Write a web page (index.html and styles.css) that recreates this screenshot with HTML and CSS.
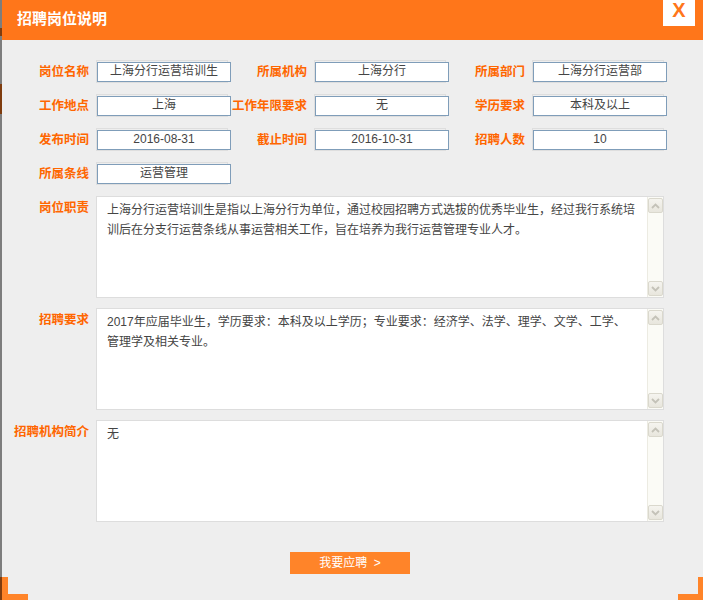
FILE: index.html
```html
<!DOCTYPE html>
<html lang="zh-CN">
<head>
<meta charset="utf-8">
<title>招聘岗位说明</title>
<link rel="stylesheet" href="styles.css">
</head>
<body>
<div class="page">
  <div class="strip"></div>
  <div class="modal">
    <div class="header">
      <h1 class="title">招聘岗位说明</h1>
      <span class="close">X</span>
    </div>
    <div class="content">
      <div class="fields">
        <span class="label">岗位名称</span>
        <span class="field"><span class="value">上海分行运营培训生</span></span>
        <span class="label">所属机构</span>
        <span class="field"><span class="value">上海分行</span></span>
        <span class="label">所属部门</span>
        <span class="field"><span class="value">上海分行运营部</span></span>

        <span class="label">工作地点</span>
        <span class="field"><span class="value">上海</span></span>
        <span class="label">工作年限要求</span>
        <span class="field"><span class="value">无</span></span>
        <span class="label">学历要求</span>
        <span class="field"><span class="value">本科及以上</span></span>

        <span class="label">发布时间</span>
        <span class="field"><span class="value">2016-08-31</span></span>
        <span class="label">截止时间</span>
        <span class="field"><span class="value">2016-10-31</span></span>
        <span class="label">招聘人数</span>
        <span class="field"><span class="value">10</span></span>

        <span class="label">所属条线</span>
        <span class="field"><span class="value">运营管理</span></span>
      </div>

      <div class="blocks">
        <div class="block">
          <span class="block-label">岗位职责</span>
          <div class="box">
            <div class="box-text">上海分行运营培训生是指以上海分行为单位，通过校园招聘方式选拔的优秀毕业生，经过我行系统培训后在分支行运营条线从事运营相关工作，旨在培养为我行运营管理专业人才。</div>
            <div class="scrollbar">
              <span class="sb-btn"><svg width="9" height="6" viewBox="0 0 9 6"><polyline points="1,5 4.5,1.5 8,5" fill="none" stroke="#c4c2b8" stroke-width="1.8"/></svg></span>
              <span class="sb-btn"><svg width="9" height="6" viewBox="0 0 9 6"><polyline points="1,1 4.5,4.5 8,1" fill="none" stroke="#c4c2b8" stroke-width="1.8"/></svg></span>
            </div>
          </div>
        </div>
        <div class="block">
          <span class="block-label">招聘要求</span>
          <div class="box">
            <div class="box-text">2017年应届毕业生，学历要求：本科及以上学历；专业要求：经济学、法学、理学、文学、工学、管理学及相关专业。</div>
            <div class="scrollbar">
              <span class="sb-btn"><svg width="9" height="6" viewBox="0 0 9 6"><polyline points="1,5 4.5,1.5 8,5" fill="none" stroke="#c4c2b8" stroke-width="1.8"/></svg></span>
              <span class="sb-btn"><svg width="9" height="6" viewBox="0 0 9 6"><polyline points="1,1 4.5,4.5 8,1" fill="none" stroke="#c4c2b8" stroke-width="1.8"/></svg></span>
            </div>
          </div>
        </div>
        <div class="block">
          <span class="block-label">招聘机构简介</span>
          <div class="box">
            <div class="box-text">无</div>
            <div class="scrollbar">
              <span class="sb-btn"><svg width="9" height="6" viewBox="0 0 9 6"><polyline points="1,5 4.5,1.5 8,5" fill="none" stroke="#c4c2b8" stroke-width="1.8"/></svg></span>
              <span class="sb-btn"><svg width="9" height="6" viewBox="0 0 9 6"><polyline points="1,1 4.5,4.5 8,1" fill="none" stroke="#c4c2b8" stroke-width="1.8"/></svg></span>
            </div>
          </div>
        </div>
      </div>

      <div class="actions">
        <button class="apply" type="button">我要应聘&nbsp;&nbsp;&gt;</button>
      </div>
    </div>
    <span class="corner corner-bl"></span>
    <span class="corner corner-br"></span>
  </div>
</div>
</body>
</html>
```
FILE: styles.css
```css
html, body {
  margin: 0;
  padding: 0;
}
body {
  width: 703px;
  height: 600px;
  overflow: hidden;
  background: #eeeeee;
  font-family: "Liberation Sans", "Noto Sans CJK SC", sans-serif;
}
.page {
  display: flex;
  height: 600px;
}
.strip {
  width: 2px;
  flex: none;
  background: linear-gradient(to bottom,
    #7d7d7d 0, #7d7d7d 28px,
    #7f3c0e 28px, #7f3c0e 36px,
    #7d7d7d 36px, #7d7d7d 84px,
    #7f3c0e 84px, #7f3c0e 114px,
    #7d7d7d 114px, #7d7d7d 577px,
    #7f3c0e 577px);
}
.modal {
  flex: 1;
  position: relative;
  background: #eeeeee;
  display: flex;
  flex-direction: column;
}
.header {
  height: 40px;
  flex: none;
  background: #ff761a;
  display: flex;
  justify-content: space-between;
  align-items: flex-start;
  padding: 0 8px 0 15px;
}
.title {
  margin: 0;
  font-size: 15px;
  font-weight: bold;
  color: #ffffff;
  line-height: 37px;
}
.close {
  width: 32px;
  height: 26px;
  background: #ffffff;
  color: #ff761a;
  font-family: "Liberation Sans", sans-serif;
  font-weight: bold;
  font-size: 20px;
  line-height: 21px;
  text-align: center;
}
.content {
  padding-top: 20px;
}
.fields {
  display: grid;
  grid-template-columns: 94px 132px 86px 132px 86px 132px;
  grid-auto-rows: 23px;
  row-gap: 11px;
  align-items: center;
}
.label {
  text-align: right;
  padding-right: 7px;
  color: #ff6600;
  font-weight: bold;
  font-size: 12.5px;
  line-height: 14px;
  white-space: nowrap;
}
.field {
  height: 23px;
  box-sizing: border-box;
  border: 1px solid #dedede;
}
.value {
  display: block;
  width: 134px;
  height: 20px;
  box-sizing: border-box;
  margin-top: 1px;
  border: 1px solid #7f9db9;
  background: #ffffff;
  text-align: center;
  font-size: 12px;
  line-height: 17px;
  color: #444444;
  white-space: nowrap;
}
.blocks {
  margin-top: 11px;
  display: flex;
  flex-direction: column;
  gap: 10px;
}
.block {
  display: flex;
}
.block-label {
  width: 94px;
  flex: none;
  box-sizing: border-box;
  padding: 5px 7px 0 0;
  text-align: right;
  color: #ff6600;
  font-weight: bold;
  font-size: 12.5px;
  line-height: 14px;
  white-space: nowrap;
}
.box {
  width: 568px;
  height: 102px;
  box-sizing: border-box;
  border: 1px solid #dddddd;
  background: #ffffff;
  display: flex;
}
.box-text {
  flex: 1;
  padding: 3px 10px 0 10px;
  font-size: 12px;
  line-height: 20px;
  color: #444444;
}
.scrollbar {
  width: 16px;
  flex: none;
  box-sizing: border-box;
  background: #fbfbf6;
  border-left: 1px solid #ecebe2;
  padding: 1px 0;
  display: flex;
  flex-direction: column;
  justify-content: space-between;
}
.sb-btn {
  width: 15px;
  height: 15px;
  box-sizing: border-box;
  border: 1px solid #dad8cd;
  border-radius: 2px;
  background: linear-gradient(#f5f4ef, #e8e6dd);
  display: flex;
  align-items: center;
  justify-content: center;
}
.sb-btn svg {
  display: block;
}
.actions {
  margin-top: 30px;
  padding-left: 288px;
  display: flex;
}
.apply {
  width: 120px;
  height: 22px;
  padding: 0;
  border: 0;
  background: #ff8429;
  color: #ffffff;
  font-family: "Liberation Sans", "Noto Sans CJK SC", sans-serif;
  font-size: 12px;
  line-height: 22px;
}
.corner {
  position: absolute;
  bottom: 0;
  width: 20px;
  height: 17px;
  border-bottom: 6px solid #ff8429;
}
.corner-bl {
  left: 0;
  border-left: 6px solid #ff8429;
}
.corner-br {
  right: 0;
  border-right: 5px solid #ff8429;
}
```
